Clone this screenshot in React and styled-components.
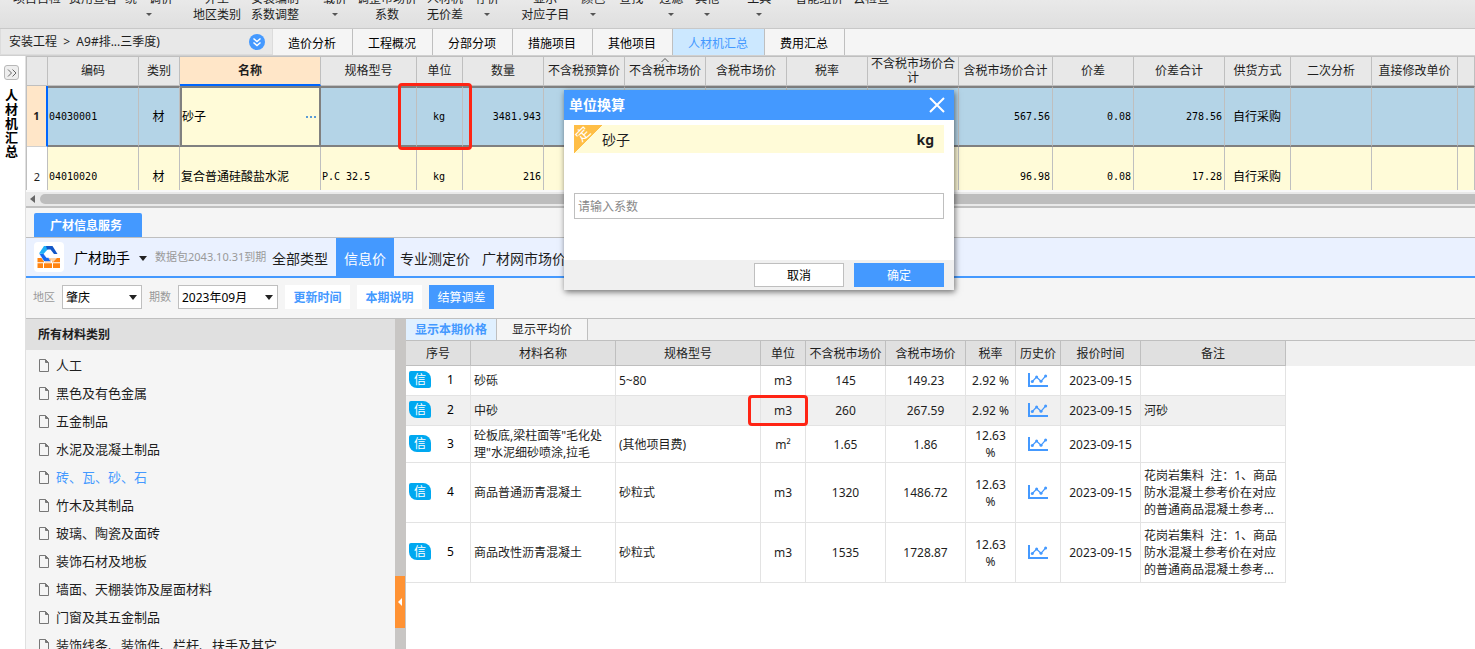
import React from 'react';
import styled, { createGlobalStyle } from 'styled-components';

const GlobalStyle = createGlobalStyle`
* {
  box-sizing: border-box;
}
body {
  margin: 0;
  overflow: hidden;
  background: #fff;
  color: #1e1e1e;
  font-family: "Noto Sans", "Noto Sans CJK SC", sans-serif;
  font-size: 12px;
  line-height: 16px;
}
button, input, select {
  font-family: inherit;
  font-size: 12px;
  line-height: 16px;
  color: inherit;
  margin: 0;
  padding: 0;
  border: none;
  border-radius: 0;
  background: none;
}
`;

const Page = styled.div`
  display: flex;
  flex-direction: column;
  height: 100vh;
`;

/* ribbon */

const Ribbon = styled.header`
  display: flex;
  align-items: flex-end;
  height: 29px;
  padding-bottom: 5px;
  border-bottom: 1px solid #c8c8c8;
  background: linear-gradient(#e9e9e9, #dfdfdf);
  overflow: hidden;
`;
const RibbonItem = styled.button`
  display: flex;
  flex-direction: column;
  align-items: center;
  flex: none;
  height: 32px;
  margin-left: ${(p) => p.$gap}px;
  white-space: nowrap;
`;
const RibbonArrow = styled.span`
  margin-top: 6px;
  border: 3px solid transparent;
  border-top-color: #555;
  border-bottom: none;
`;

/* project tabs */

const TabBar = styled.nav`
  display: flex;
  height: 27px;
  background: #f5f5f5;
  border-bottom: 1px solid #d0d0d0;
`;
const Crumb = styled.div`
  display: flex;
  align-items: center;
  justify-content: space-between;
  width: 273px;
  padding: 1px 7px 0 8px;
  background: #e8e8e8;
  border: 1px solid #dcdcdc;
  border-top: none;
`;
const CrumbText = styled.span`
  white-space: pre;
`;
const RoundButton = styled.button`
  display: flex;
  width: 16px;
  height: 16px;
  border-radius: 8px;
  background: #4499ff;
`;
const Tab = styled.button`
  padding: 3px 16px 0 15px;
  border-right: 1px solid #bfbfbf;
  color: ${(p) => (p.$active ? '#4499ff' : '#000')};
  background: ${(p) => (p.$active ? '#cce8ff' : '#f5f5f5')};
`;

/* body */

const Body = styled.div`
  display: flex;
  flex: 1;
  min-height: 0;
`;
const Rail = styled.aside`
  display: flex;
  flex-direction: column;
  align-items: center;
  width: 26px;
  padding: 9px 2px 0 0;
  border-right: 1px solid #e0e0e0;
  background: #fff;
`;
const RailButton = styled.button`
  display: flex;
  align-items: center;
  justify-content: center;
  width: 15px;
  height: 15px;
  border: 1px solid #b8b8b8;
  border-radius: 3px;
  background: #eee;
`;
const RailTitle = styled.div`
  width: 13px;
  margin-top: 8px;
  color: #000;
  font-size: 13px;
  font-weight: 700;
  line-height: 14px;
  text-align: center;
`;
const Main = styled.main`
  display: flex;
  flex-direction: column;
  flex: 1;
  min-width: 0;
  background: #f5f5f5;
`;

/* upper grid */

const GridView = styled.div`
  flex: none;
  height: 134px;
  overflow: hidden;
`;
const Grid = styled.table`
  width: 100%;
  table-layout: fixed;
  border-collapse: separate;
  border-spacing: 0;
  border-left: 1px solid #bfbfbf;
`;
const GridHead = styled.th`
  position: relative;
  height: 30px;
  padding: 0 2px;
  border-top: 1px solid #bfbfbf;
  border-right: 1px solid #bfbfbf;
  border-bottom: ${(p) => (p.$active ? '2px solid #0066ff' : '1px solid #bfbfbf')};
  background: ${(p) => (p.$active ? '#ffe6c8' : '#e8e8e8')};
  font-weight: ${(p) => (p.$active ? 700 : 400)};
  line-height: 14px;
`;
const SortMark = styled.svg`
  position: absolute;
  top: 1px;
  left: 50%;
  margin-left: -4px;
`;
const GridIndex = styled.td`
  height: ${(p) => (p.$active ? 61 : 60)}px;
  padding: 0;
  border-right: ${(p) => (p.$active ? '2px solid #0066ff' : '1px solid #bfbfbf')};
  border-bottom: 1px solid #d0d0d0;
  background: ${(p) => (p.$active ? '#ffe6c8' : '#fff')};
  font-size: 11px;
  font-weight: ${(p) => (p.$active ? 700 : 400)};
  text-align: center;
`;
const GridCell = styled.td`
  position: relative;
  padding: 0 2px 0 1px;
  border-right: 1px solid #bfbfbf;
  border-top: ${(p) => (p.$active ? '2px solid #808080' : 'none')};
  border-bottom: ${(p) => (p.$active ? '2px solid #808080' : 'none')};
  background: ${(p) => (p.$active ? '#b4d4e7' : '#fffbd8')};
  color: #000;
  font-family: ${(p) => (p.$mono ? '"DejaVu Sans Mono", monospace' : 'inherit')};
  font-size: ${(p) => (p.$mono ? 10 : 12)}px;
  text-align: ${(p) => p.$align || 'left'};
  white-space: pre;
`;
const EditCell = styled(GridCell)`
  border: 2px solid #808080;
  background: #fffbd8;
  padding: 0 3px 0 0;
`;
const EditRow = styled.div`
  display: flex;
  align-items: center;
  justify-content: space-between;
`;
const Dots = styled.button`
  display: flex;
  gap: 2px;
  &::before, &::after, span {
    content: "";
    width: 2px;
    height: 2px;
    background: #5a9bd5;
  }
`;
const RedFrame = styled.div`
  position: absolute;
  z-index: 2;
  top: ${(p) => p.$y}px;
  bottom: ${(p) => p.$y}px;
  left: ${(p) => p.$left}px;
  right: ${(p) => p.$right}px;
  border: 3px solid #ff2414;
  border-radius: 4px;
  pointer-events: none;
`;
const ScrollTrack = styled.div`
  display: flex;
  align-items: center;
  gap: 5px;
  flex: none;
  height: 18px;
  padding: 2px 0 2px 4px;
  border-bottom: 2px solid #c0c0c0;
  border-top: 2px solid #f8f8f8;
  background: #e9e9e9;
`;
const ScrollThumb = styled.div`
  flex: 1;
  height: 10px;
  border-radius: 5px 0 0 5px;
  background: #bdbdbd;
`;

/* price service */

const ServiceTabs = styled.div`
  display: flex;
  flex: none;
  height: 30px;
  padding: 5px 0 0 8px;
  border-bottom: 1px solid #bfbfbf;
`;
const ServiceTab = styled.button`
  width: 108px;
  padding: 2px 4px 0 0;
  border-radius: 2px 2px 0 0;
  background: #4499ff;
  color: #fff;
  font-weight: 700;
`;
const Helper = styled.div`
  display: flex;
  align-items: center;
  flex: none;
  height: 40px;
  padding-left: 8px;
  border-bottom: 2px solid #4499ff;
  background: #eaf1ff;
`;
const Logo = styled.svg`
  flex: none;
  border-radius: 4px;
  background: #fff;
`;
const HelperName = styled.button`
  display: flex;
  align-items: center;
  gap: 9px;
  margin: 0 8px 0 10px;
  padding-top: 2px;
  color: #000;
  font-size: 14px;
  line-height: 20px;
`;
const Caret = styled.span`
  border: 4px solid transparent;
  border-top: 5px solid #222;
  border-bottom: none;
`;
const Expiry = styled.span`
  width: 109px;
  color: #999;
  font-size: 11px;
  white-space: nowrap;
`;
const HelperTab = styled.button`
  align-self: stretch;
  padding: 4px ${(p) => (p.$wide ? 8 : 6)}px 0;
  font-size: 14px;
  line-height: 20px;
  white-space: nowrap;
  color: ${(p) => (p.$active ? '#fff' : '#1e1e1e')};
  background: ${(p) => (p.$active ? '#4499ff' : 'transparent')};
`;
const Filters = styled.div`
  display: flex;
  align-items: center;
  gap: 7px;
  flex: none;
  height: 41px;
  padding: 0 7px 2px;
  border-bottom: 1px solid #bfbfbf;
`;
const FilterLabel = styled.label`
  color: #999;
  font-size: 11px;
`;
const SelectBox = styled.div`
  display: grid;
  align-items: center;
  width: ${(p) => p.$width}px;
  height: 24px;
  border: 1px solid #bfbfbf;
  background: #fff;
  > * {
    grid-area: 1 / 1;
  }
  > span {
    justify-self: end;
    margin-right: 4px;
    pointer-events: none;
  }
`;
const Select = styled.select`
  width: 100%;
  height: 22px;
  padding: 1px 0 0 3px;
  appearance: none;
  color: #000;
`;
const FilterButton = styled.button`
  width: 65px;
  height: 24px;
  padding-top: 2px;
  background: ${(p) => (p.$primary ? '#4499ff' : '#fff')};
  color: ${(p) => (p.$primary ? '#fff' : '#4499ff')};
  font-weight: ${(p) => (p.$primary ? 400 : 700)};
`;

const Lower = styled.div`
  display: flex;
  flex: 1;
  min-height: 0;
`;
const Categories = styled.section`
  flex: none;
  width: 369px;
  overflow: hidden;
`;
const CategoryTitle = styled.h2`
  margin: 0;
  padding: 8px 12px 7px;
  background: #e0e0e0;
  font-size: 12px;
  font-weight: 700;
  line-height: 16px;
`;
const CategoryList = styled.ul`
  margin: 0;
  padding: 1px 0 0 13px;
  list-style: none;
`;
const Category = styled.li`
  display: flex;
  align-items: center;
  gap: 7px;
  height: 28px;
  font-size: 13px;
  line-height: 20px;
  color: ${(p) => (p.$active ? '#4499ff' : '#1e1e1e')};
`;
const Splitter = styled.div`
  flex: none;
  width: 11px;
  padding-top: 257px;
  background: #c8c6c4;
`;
const SplitHandle = styled.button`
  display: flex;
  align-items: center;
  justify-content: center;
  width: 10px;
  height: 52px;
  background: #ff9233;
`;

const Prices = styled.section`
  flex: 1;
  min-width: 0;
  overflow: hidden;
  background: #fff;
`;
const PriceTabs = styled.div`
  display: flex;
  height: 21px;
  background: #f1f1f1;
`;
const PriceTab = styled.button`
  width: 91px;
  padding-top: 1px;
  border-right: 1px solid #bfbfbf;
  background: ${(p) => (p.$active ? '#e0f0ff' : '#f5f5f5')};
  color: ${(p) => (p.$active ? '#4499ff' : '#1e1e1e')};
  font-weight: ${(p) => (p.$active ? 700 : 400)};
`;
const PriceHeadBand = styled.div`
  height: 26px;
  margin-bottom: -26px;
  border-top: 1px solid #bfbfbf;
  background: #f0f0f0;
`;
const PriceTable = styled.table`
  position: relative;
  width: 880px;
  table-layout: fixed;
  border-collapse: separate;
  border-spacing: 0;
`;
const PriceHead = styled.th`
  height: 26px;
  padding: 2px 0 0;
  border: solid #bfbfbf;
  border-width: 1px 1px 1px 0;
  background: #e0e0e0;
  font-weight: 400;
  white-space: nowrap;
`;
const PriceCell = styled.td`
  position: relative;
  height: ${(p) => p.$height}px;
  padding: 0 3px;
  border: solid #e3e3e3;
  border-width: 0 1px 1px 0;
  background: ${(p) => (p.$hover ? '#f0f0f0' : '#fff')};
  line-height: 17px;
  text-align: ${(p) => p.$align || 'center'};
`;
const Order = styled.div`
  display: flex;
  align-items: center;
  gap: 16px;
  padding-bottom: 2px;
  color: #000;
`;
const Badge = styled.span`
  width: 22px;
  height: 17px;
  border-radius: 2px 8px 2px 8px;
  background: #00a8f0;
  color: #fff;
`;

/* dialog */

const Dialog = styled.div`
  position: absolute;
  z-index: 5;
  top: 90px;
  left: 564px;
  width: 390px;
  background: #fff;
  box-shadow: 1px 2px 6px rgba(0, 0, 0, 0.55);
`;
const DialogHead = styled.div`
  display: flex;
  align-items: center;
  justify-content: space-between;
  height: 30px;
  padding: 0 9px 0 5px;
  background: #4499ff;
  color: #fff;
`;
const DialogTitle = styled.h2`
  margin: 0;
  font-size: 14px;
  font-weight: 700;
  line-height: 20px;
`;
const CloseButton = styled.button`
  display: flex;
`;
const DialogBody = styled.div`
  display: flex;
  flex-direction: column;
  gap: 40px;
  padding: 5px 10px 41px;
`;
const Material = styled.div`
  position: relative;
  display: flex;
  align-items: center;
  justify-content: space-between;
  height: 28px;
  padding: 2px 10px 0 28px;
  background: #fffbd8;
  font-size: 14px;
  line-height: 20px;
`;
const Corner = styled.span`
  position: absolute;
  top: 0;
  left: 0;
  width: 28px;
  height: 28px;
  background: linear-gradient(135deg, #ffbe46 50%, transparent 50%);
  color: #fff;
`;
const CornerText = styled.span`
  display: block;
  width: 18px;
  height: 18px;
  font-size: 14px;
  line-height: 18px;
  text-align: center;
  transform: rotate(-45deg);
`;
const Factor = styled.input`
  width: 100%;
  height: 26px;
  padding: 1px 3px 0;
  border: 1px solid #bfbfbf;
  background: #fff;
  &::placeholder {
    color: #888;
    opacity: 1;
  }
`;
const DialogFoot = styled.div`
  display: flex;
  justify-content: flex-end;
  gap: 10px;
  padding: 3px 10px;
  background: #f0f0f0;
`;
const DialogButton = styled.button`
  width: 90px;
  height: 24px;
  padding-top: 2px;
  border: 1px solid ${(p) => (p.$primary ? '#4499ff' : '#bfbfbf')};
  background: ${(p) => (p.$primary ? '#4499ff' : '#fff')};
  color: ${(p) => (p.$primary ? '#fff' : '#000')};
`;

const ribbonItems = [
  { top: '项目自检', gap: 13 },
  { top: '费用查看', gap: 8 },
  { top: '统一调价', gap: 8, menu: true },
  { top: '外土', bottom: '地区类别', gap: 20 },
  { top: '安装编制', bottom: '系数调整', gap: 10 },
  { top: '载价', gap: 24, menu: true },
  { top: '调整市场价', bottom: '系数', gap: 10 },
  { top: '人材机', bottom: '无价差', gap: 10 },
  { top: '存价', gap: 12, menu: true },
  { top: '显示', bottom: '对应子目', gap: 22 },
  { top: '颜色', gap: 12, menu: true },
  { top: '查找', gap: 14 },
  { top: '过滤', gap: 16, menu: true },
  { top: '其他', gap: 12, menu: true },
  { top: '工具', gap: 28, menu: true },
  { top: '智能组价', gap: 24 },
  { top: '云检查', gap: 10 },
];

const tabs = ['造价分析', '工程概况', '分部分项', '措施项目', '其他项目', '人材机汇总', '费用汇总'];

const gridCols = [
  { title: '', width: 21 },
  { title: '编码', width: 91 },
  { title: '类别', width: 41 },
  { title: '名称', width: 141, active: true },
  { title: '规格型号', width: 96 },
  { title: '单位', width: 46 },
  { title: '数量', width: 81 },
  { title: '不含税预算价', width: 81 },
  { title: '不含税市场价', width: 81, sort: true },
  { title: '含税市场价', width: 81 },
  { title: '税率', width: 81 },
  { title: '不含税市场价合计', width: 91 },
  { title: '含税市场价合计', width: 94 },
  { title: '价差', width: 81 },
  { title: '价差合计', width: 91 },
  { title: '供货方式', width: 66 },
  { title: '二次分析', width: 81 },
  { title: '直接修改单价', width: 86 },
  { title: '' },
];

const gridRows = [
  { id: 1, code: '04030001', name: '砂子', spec: '', amount: '3481.943', total: '567.56', diff: '0.08', diffTotal: '278.56', active: true },
  { id: 2, code: '04010020', name: '复合普通硅酸盐水泥', spec: 'P.C 32.5', amount: '216', total: '96.98', diff: '0.08', diffTotal: '17.28' },
];

const categories = [
  '人工',
  '黑色及有色金属',
  '五金制品',
  '水泥及混凝土制品',
  '砖、瓦、砂、石',
  '竹木及其制品',
  '玻璃、陶瓷及面砖',
  '装饰石材及地板',
  '墙面、天棚装饰及屋面材料',
  '门窗及其五金制品',
  '装饰线条、装饰件、栏杆、扶手及其它',
];

const priceCols = [
  ['序号', 65],
  ['材料名称', 145],
  ['规格型号', 145],
  ['单位', 45],
  ['不含税市场价', 80],
  ['含税市场价', 80],
  ['税率', 50],
  ['历史价', 45],
  ['报价时间', 80],
  ['备注', 145],
];

const remark = '花岗岩集料\u00a0 注：1、商品防水混凝土参考价在对应的普通商品混凝土参考...';
const priceRows = [
  { id: 1, name: '砂砾', spec: '5~80', unit: 'm3', net: '145', gross: '149.23', tax: '2.92 %', date: '2023-09-15', note: '', height: 30 },
  { id: 2, name: '中砂', spec: '', unit: 'm3', net: '260', gross: '267.59', tax: '2.92 %', date: '2023-09-15', note: '河砂', height: 30, hover: true },
  { id: 3, name: '砼板底,梁柱面等"毛化处理"水泥细砂喷涂,拉毛', spec: '(其他项目费)', unit: 'm²', net: '1.65', gross: '1.86', tax: '12.63 %', date: '2023-09-15', note: '', height: 37 },
  { id: 4, name: '商品普通沥青混凝土', spec: '砂粒式', unit: 'm3', net: '1320', gross: '1486.72', tax: '12.63 %', date: '2023-09-15', note: remark, height: 60 },
  { id: 5, name: '商品改性沥青混凝土', spec: '砂粒式', unit: 'm3', net: '1535', gross: '1728.87', tax: '12.63 %', date: '2023-09-15', note: remark, height: 60 },
];

const FileIcon = () => (
  <svg width="10" height="13" viewBox="0 0 10 13" fill="none" stroke="#777">
    <path d="M.5 .5H6.5L9.5 3.5V12.5H.5Z" />
    <path d="M6.5 .5V3.5H9.5" fill="#777" />
  </svg>
);

const TrendSvg = styled.svg`
  display: block;
  margin: 0 auto;
`;
const TrendIcon = () => (
  <TrendSvg width="20" height="15" viewBox="0 0 20 15" fill="none" stroke="#4499ff">
    <path d="M1 0V13H20" strokeWidth="2" />
    <path d="M4.3 8.5L8.6 4L13 8.3L17.6 3" strokeWidth="1.2" />
    <g fill="#4499ff" stroke="none">
      <circle cx="4.3" cy="8.5" r="1.5" />
      <circle cx="8.6" cy="4" r="1.5" />
      <circle cx="13" cy="8.3" r="1.5" />
      <circle cx="17.6" cy="3" r="1.5" />
    </g>
  </TrendSvg>
);

const HelperLogo = () => (
  <Logo width="30" height="30" viewBox="0 0 30 30">
    <g fill="#ff8412">
      <path d="M3.5 16H10V20.3H3.5ZM11 16H17V20.3H11ZM18 16H26V20.3H18Z" />
      <path d="M3.5 21.3H9V26H3.5ZM10 21.3H18V26H10ZM19 21.3H26V26H19Z" />
    </g>
    <path d="M15 16H23L19 20.3Z" fill="#ffd2a3" />
    <path d="M5 11.5L10 19.5H17L14.5 15.5H12.5L9.5 11.5Z" fill="#1668f0" stroke="#fff" strokeWidth=".6" />
    <path d="M5 11.5L10 4H16L13.5 7.5L9.5 12Z" fill="#1fb0f7" />
    <path d="M12 4H18.5L23.5 12H20L16.5 7.5H13Z" fill="#1257c8" />
  </Logo>
);

const GridRow = ({ row }) => {
  const active = row.active;
  return <tr>
    <GridIndex $active={active}>{row.id}</GridIndex>
    <GridCell $active={active} $mono>{row.code}</GridCell>
    <GridCell $active={active} $align="center">材</GridCell>
    {active ? (
      <EditCell>
        <EditRow>{row.name}<Dots aria-label="更多"><span /></Dots></EditRow>
      </EditCell>
    ) : <GridCell>{row.name}</GridCell>}
    <GridCell $active={active} $mono>{row.spec}</GridCell>
    <GridCell $active={active} $mono $align="center">
      kg
      {active && <RedFrame $y={-5} $left={-19} $right={-10} />}
    </GridCell>
    <GridCell $active={active} $mono $align="right">{row.amount}</GridCell>
    <GridCell $active={active} />
    <GridCell $active={active} />
    <GridCell $active={active} />
    <GridCell $active={active} />
    <GridCell $active={active} />
    <GridCell $active={active} $mono $align="right">{row.total}</GridCell>
    <GridCell $active={active} $mono $align="right">{row.diff}</GridCell>
    <GridCell $active={active} $mono $align="right">{row.diffTotal}</GridCell>
    <GridCell $active={active} $align="center">自行采购</GridCell>
    <GridCell $active={active} />
    <GridCell $active={active} />
    <GridCell $active={active} />
  </tr>;
};

const PriceRow = ({ row }) => {
  const cell = { $height: row.height, $hover: row.hover };
  return <tr>
    <PriceCell {...cell}><Order><Badge>信</Badge>{row.id}</Order></PriceCell>
    <PriceCell {...cell} $align="left">{row.name}</PriceCell>
    <PriceCell {...cell} $align="left">{row.spec}</PriceCell>
    <PriceCell {...cell}>
      {row.unit}
      {row.hover && <RedFrame $y={-1} $left={-13} $right={-3} />}
    </PriceCell>
    <PriceCell {...cell}>{row.net}</PriceCell>
    <PriceCell {...cell}>{row.gross}</PriceCell>
    <PriceCell {...cell}>{row.tax}</PriceCell>
    <PriceCell {...cell}><TrendIcon /></PriceCell>
    <PriceCell {...cell}>{row.date}</PriceCell>
    <PriceCell {...cell} $align="left">{row.note}</PriceCell>
  </tr>;
};

const UnitDialog = () => (
  <Dialog role="dialog" aria-labelledby="unit-title">
    <DialogHead>
      <DialogTitle id="unit-title">单位换算</DialogTitle>
      <CloseButton aria-label="关闭">
        <svg width="16" height="16" viewBox="0 0 16 16" stroke="#fff" strokeWidth="2">
          <path d="M1 1L15 15M15 1L1 15" />
        </svg>
      </CloseButton>
    </DialogHead>
    <DialogBody>
      <Material>
        <Corner><CornerText>定</CornerText></Corner>
        <span>砂子</span>
        <b>kg</b>
      </Material>
      <Factor aria-label="系数" placeholder="请输入系数" />
    </DialogBody>
    <DialogFoot>
      <DialogButton>取消</DialogButton>
      <DialogButton $primary>确定</DialogButton>
    </DialogFoot>
  </Dialog>
);

export default function App() {
  return <Page>
    <GlobalStyle />
    <Ribbon>
      {ribbonItems.map((item) => (
        <RibbonItem key={item.top} $gap={item.gap}>
          <span>{item.top}</span>
          {item.bottom && <span>{item.bottom}</span>}
          {item.menu && <RibbonArrow />}
        </RibbonItem>
      ))}
    </Ribbon>
    <TabBar>
      <Crumb>
        <CrumbText>{'安装工程  >  A9#排...三季度)'}</CrumbText>
        <RoundButton aria-label="展开">
          <svg width="16" height="16" viewBox="0 0 16 16" fill="none" stroke="#fff" strokeWidth="1.5">
            <path d="M4.5 4.5L8 7.5L11.5 4.5M4.5 8.5L8 11.5L11.5 8.5" />
          </svg>
        </RoundButton>
      </Crumb>
      {tabs.map((tab) => <Tab key={tab} $active={tab === '人材机汇总'}>{tab}</Tab>)}
    </TabBar>
    <Body>
      <Rail>
        <RailButton aria-label="展开侧栏">
          <svg width="10" height="8" viewBox="0 0 10 8" fill="none" stroke="#666">
            <path d="M1 .5L4.5 4L1 7.5M5.5 .5L9 4L5.5 7.5" />
          </svg>
        </RailButton>
        <RailTitle>人材机汇总</RailTitle>
      </Rail>
      <Main>
        <GridView>
          <Grid>
            <colgroup>
              {gridCols.map((col, i) => <col key={i} width={col.width} />)}
            </colgroup>
            <thead>
              <tr>
                {gridCols.map((col, i) => (
                  <GridHead key={i} $active={col.active}>
                    {col.title}
                    {col.sort && (
                      <SortMark width="8" height="4" viewBox="0 0 8 4" fill="none" stroke="#555">
                        <path d="M.5 4L4 .5L7.5 4" />
                      </SortMark>
                    )}
                  </GridHead>
                ))}
              </tr>
            </thead>
            <tbody>
              {gridRows.map((row) => <GridRow key={row.id} row={row} />)}
            </tbody>
          </Grid>
        </GridView>
        <ScrollTrack>
          <svg width="5" height="8" viewBox="0 0 5 8" fill="#666"><path d="M5 0V8L0 4Z" /></svg>
          <ScrollThumb />
        </ScrollTrack>
        <ServiceTabs>
          <ServiceTab>广材信息服务</ServiceTab>
        </ServiceTabs>
        <Helper>
          <HelperLogo />
          <HelperName>广材助手<Caret /></HelperName>
          <Expiry>数据包2043.10.31到期</Expiry>
          <HelperTab $wide>全部类型</HelperTab>
          <HelperTab $wide $active>信息价</HelperTab>
          <HelperTab>专业测定价</HelperTab>
          <HelperTab>广材网市场价</HelperTab>
        </Helper>
        <Filters>
          <FilterLabel htmlFor="region">地区</FilterLabel>
          <SelectBox $width={80}>
            <Select id="region"><option>肇庆</option></Select>
            <Caret />
          </SelectBox>
          <FilterLabel htmlFor="period">期数</FilterLabel>
          <SelectBox $width={100}>
            <Select id="period"><option>2023年09月</option></Select>
            <Caret />
          </SelectBox>
          <FilterButton>更新时间</FilterButton>
          <FilterButton>本期说明</FilterButton>
          <FilterButton $primary>结算调差</FilterButton>
        </Filters>
        <Lower>
          <Categories>
            <CategoryTitle>所有材料类别</CategoryTitle>
            <CategoryList>
              {categories.map((name) => (
                <Category key={name} $active={name === '砖、瓦、砂、石'}><FileIcon />{name}</Category>
              ))}
            </CategoryList>
          </Categories>
          <Splitter>
            <SplitHandle aria-label="收起">
              <svg width="4" height="8" viewBox="0 0 4 8" fill="#fff"><path d="M4 0V8L0 4Z" /></svg>
            </SplitHandle>
          </Splitter>
          <Prices>
            <PriceTabs>
              <PriceTab $active>显示本期价格</PriceTab>
              <PriceTab>显示平均价</PriceTab>
            </PriceTabs>
            <PriceHeadBand />
            <PriceTable>
              <colgroup>
                {priceCols.map(([title, width]) => <col key={title} width={width} />)}
              </colgroup>
              <thead>
                <tr>{priceCols.map(([title]) => <PriceHead key={title}>{title}</PriceHead>)}</tr>
              </thead>
              <tbody>
                {priceRows.map((row) => <PriceRow key={row.id} row={row} />)}
              </tbody>
            </PriceTable>
          </Prices>
        </Lower>
      </Main>
    </Body>
    <UnitDialog />
  </Page>;
}
